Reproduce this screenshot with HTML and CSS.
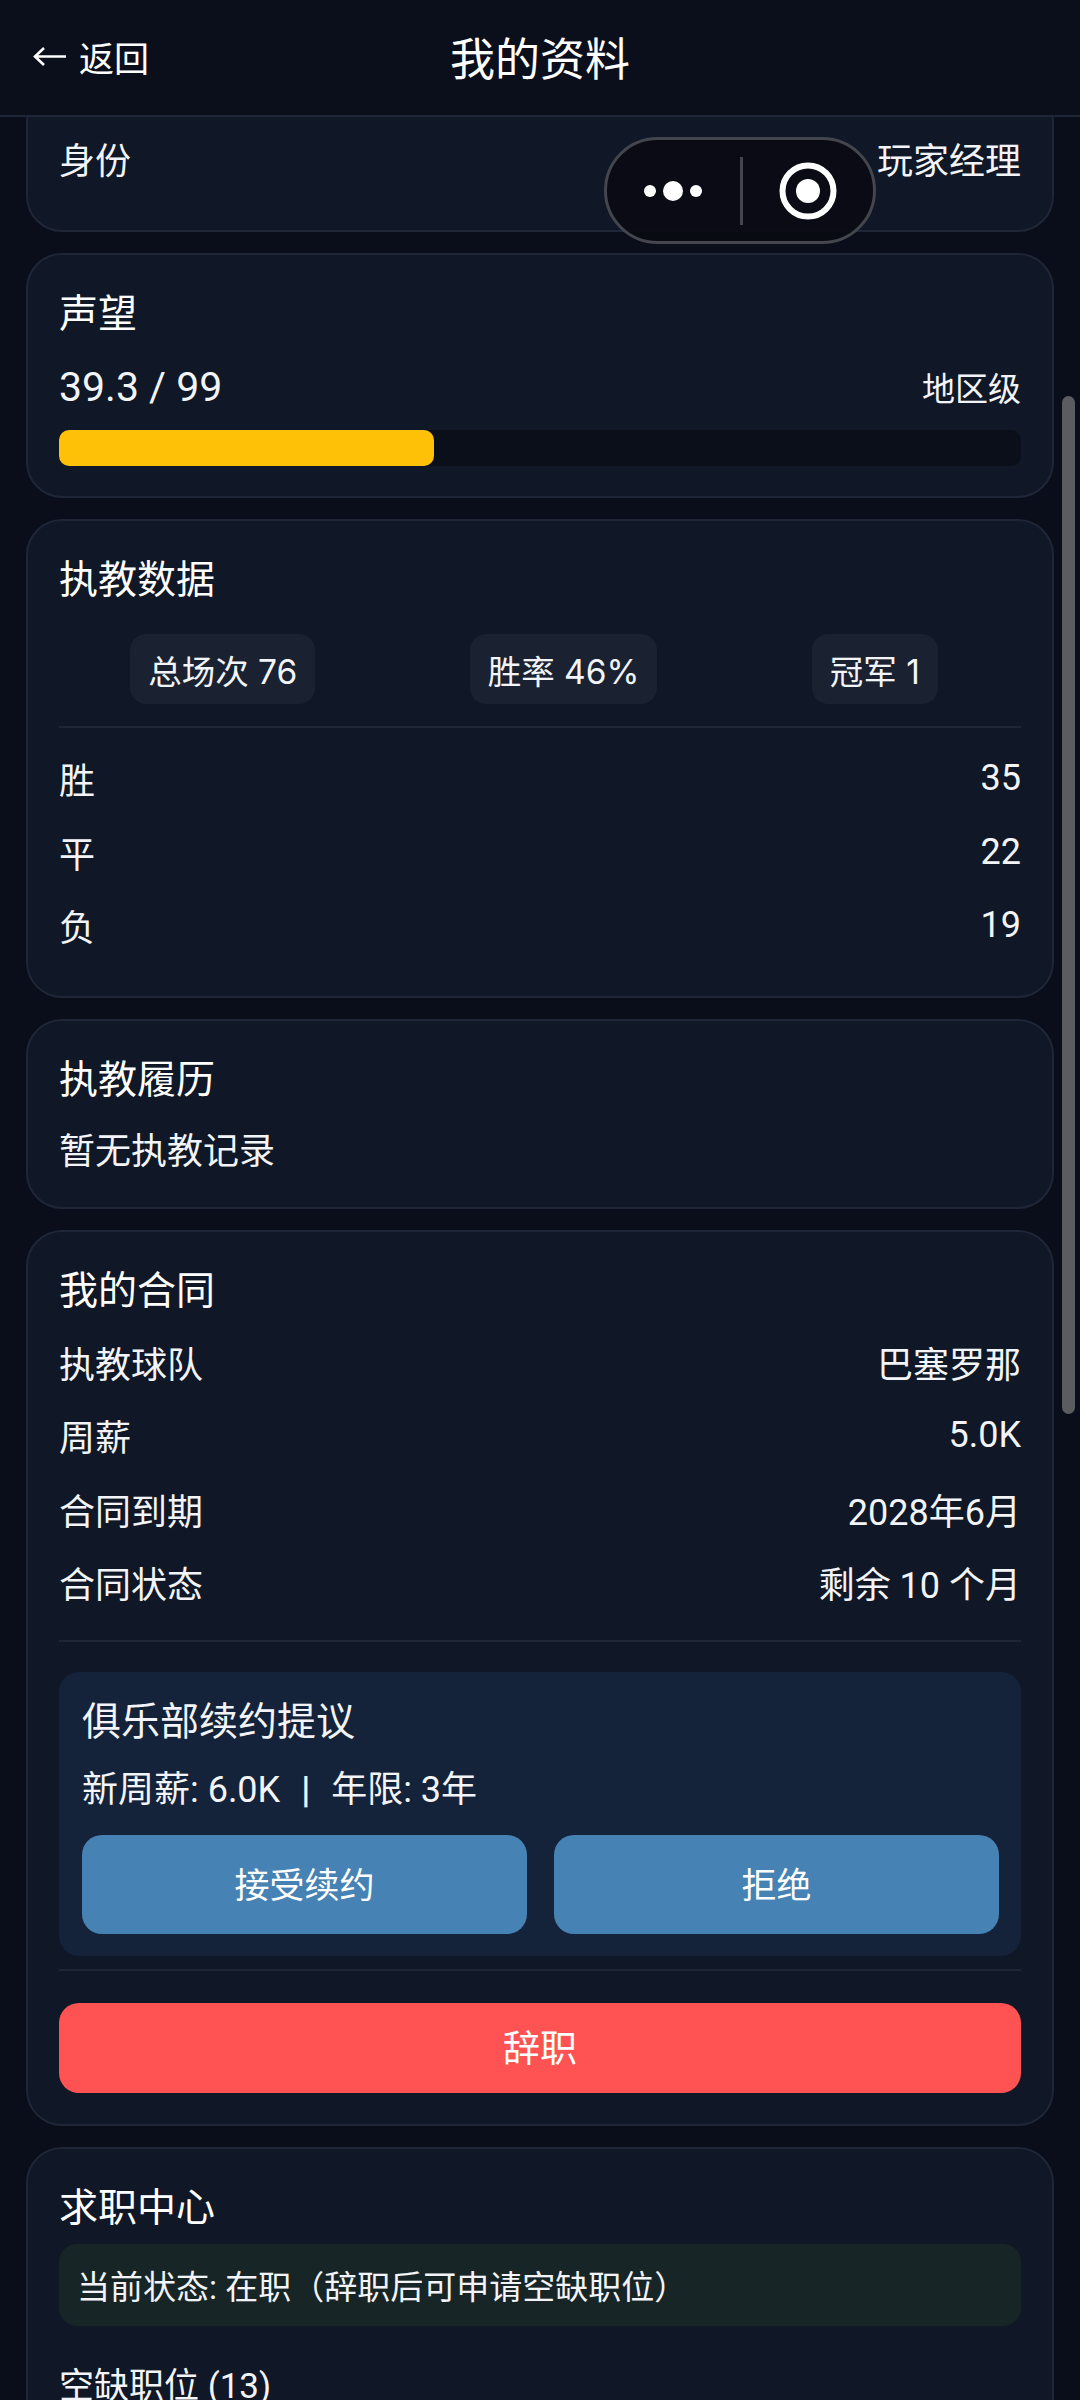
FILE: index.html
```html
<!DOCTYPE html>
<html lang="zh-CN">
<head>
  <meta charset="UTF-8" />
  <meta name="viewport" content="width=device-width, initial-scale=1.0" />
  <title>我的资料</title>
  <link rel="stylesheet" href="styles.css">
</head>
<body>
  <div class="app">
    <header class="topbar">
      <span class="back">
        <svg class="back-arrow" width="34" height="20" viewBox="0 0 34 20">
          <path d="M33 10H3M11 1.5L2 10l9 8.5" fill="none" stroke="#fff" stroke-width="2.6"/>
        </svg>
        返回
      </span>
      <h1>我的资料</h1>
    </header>

    <main class="scroller">
      <div class="list">
        <section class="card card-identity">
          <div class="row"><span>身份</span><span>玩家经理</span></div>
        </section>

        <section class="card card-rep">
          <h2>声望</h2>
          <div class="meta"><span class="rep-value">39.3 / 99</span><span class="rep-level">地区级</span></div>
          <div class="bar"><div class="bar-fill" style="width: 39%"></div></div>
        </section>

        <section class="card">
          <h2>执教数据</h2>
          <div class="pills">
            <span class="pill">总场次 76</span>
            <span class="pill">胜率 46%</span>
            <span class="pill">冠军 1</span>
          </div>
          <hr class="line line-stats">
          <div class="row"><span>胜</span><span>35</span></div>
          <div class="row"><span>平</span><span>22</span></div>
          <div class="row"><span>负</span><span>19</span></div>
        </section>

        <section class="card card-history">
          <h2>执教履历</h2>
          <p class="empty">暂无执教记录</p>
        </section>

        <section class="card">
          <h2>我的合同</h2>
          <div class="row row-first"><span>执教球队</span><span>巴塞罗那</span></div>
          <div class="row"><span>周薪</span><span>5.0K</span></div>
          <div class="row"><span>合同到期</span><span>2028年6月</span></div>
          <div class="row"><span>合同状态</span><span>剩余 10 个月</span></div>
          <hr class="line line-contract">
          <div class="offer">
            <h3>俱乐部续约提议</h3>
            <p>新周薪: 6.0K <b class="offer-sep">|</b> 年限: 3年</p>
            <div class="offer-actions">
              <button class="btn">接受续约</button>
              <button class="btn">拒绝</button>
            </div>
          </div>
          <hr class="line line-offer">
          <button class="btn-danger">辞职</button>
        </section>

        <section class="card">
          <h2>求职中心</h2>
          <div class="status">当前状态: 在职（辞职后可申请空缺职位）</div>
          <h3 class="vacancy">空缺职位 (13)</h3>
        </section>
      </div>
    </main>

    <div class="scrollbar"></div>

    <div class="capsule">
      <svg class="capsule-icon" width="60" height="24" viewBox="0 0 60 24">
        <circle cx="7" cy="12" r="6" fill="#fff"/>
        <circle cx="30" cy="12" r="10" fill="#fff"/>
        <circle cx="53" cy="12" r="6" fill="#fff"/>
      </svg>
      <span class="capsule-sep"></span>
      <svg class="capsule-icon" width="58" height="58" viewBox="0 0 58 58">
        <circle cx="29" cy="29" r="25.5" fill="none" stroke="#fff" stroke-width="6"/>
        <circle cx="29" cy="29" r="12" fill="#fff"/>
      </svg>
    </div>
  </div>
</body>
</html>
```

FILE: styles.css
```css
* {
  box-sizing: border-box;
}
html, body {
  margin: 0;
  height: 100%;
}
body {
  font-family: Roboto, "Noto Sans CJK SC", sans-serif;
  background-color: #0a0e1a;
  color: #f2f4f7;
}
.app {
  position: relative;
  height: 2400px;
  overflow: hidden;
  display: flex;
  flex-direction: column;
}
.topbar {
  flex: none;
  height: 117px;
  padding-bottom: 3px;
  display: flex;
  align-items: center;
  justify-content: center;
  position: relative;
  background-color: #0b0f1c;
  border-bottom: 2px solid #1e2638;
}
.topbar h1 {
  margin: 0;
  font-size: 45px;
  font-weight: 400;
  color: #fff;
}
.back {
  position: absolute;
  left: 33px;
  top: 50%;
  transform: translateY(-52%);
  display: flex;
  align-items: center;
  gap: 12px;
  font-size: 35px;
  color: #fff;
}
.back-arrow {
  flex: none;
  display: block;
}
.scroller {
  flex: 1;
  overflow: hidden;
  padding: 0 26px;
}
.list {
  margin-top: -30px;
  display: flex;
  flex-direction: column;
  gap: 21px;
}
.card {
  background-color: #101726;
  border: 2px solid #1e2638;
  border-radius: 36px;
  padding: 31px;
}
.card-identity {
  padding-top: 35px;
  padding-bottom: 0;
  height: 145px;
}
.card-rep {
  padding-bottom: 30px;
}
.card-history {
  padding-bottom: 30px;
}
h2 {
  margin: 0;
  font-size: 39px;
  font-weight: 400;
  line-height: 56px;
  color: #fff;
}
.row {
  height: 73.5px;
  padding-bottom: 5px;
  display: flex;
  align-items: center;
  justify-content: space-between;
  font-size: 36px;
}
.row-first {
  margin-top: 9px;
}
.meta {
  margin-top: 20px;
  height: 50px;
  display: flex;
  align-items: center;
  justify-content: space-between;
}
.rep-value {
  font-size: 41px;
}
.rep-level {
  font-size: 33px;
}
.bar {
  margin-top: 18px;
  height: 36px;
  border-radius: 10px;
  background-color: #0b0f1a;
}
.bar-fill {
  height: 100%;
  border-radius: 10px;
  background-color: #ffc107;
}
.pills {
  margin-top: 26px;
  display: flex;
  justify-content: space-around;
}
.pill {
  height: 70px;
  margin-right: 12px;
  padding: 0 18px;
  display: flex;
  align-items: center;
  font-family: Inter, "Noto Sans CJK SC", sans-serif;
  font-size: 33.5px;
  border-radius: 16px;
  background-color: #1a2232;
}
.line {
  margin: 0;
  border: none;
  height: 2px;
  background-color: #1e2638;
}
.line-stats {
  margin-top: 22px;
  margin-bottom: 16px;
}
.line-contract {
  margin-top: 18px;
  margin-bottom: 30px;
}
.line-offer {
  margin-top: 13px;
  margin-bottom: 32px;
}
.empty {
  margin: 19px 0 0;
  font-size: 36px;
  line-height: 50px;
}
.offer {
  padding: 22px 22px 22px 23px;
  border-radius: 20px;
  background-color: #15233a;
}
.offer h3 {
  margin: 0;
  font-size: 39px;
  font-weight: 400;
  line-height: 56px;
}
.offer p {
  margin: 15px 0 0;
  font-size: 36px;
  line-height: 50px;
}
.offer-sep {
  margin: 0 12px;
  font-weight: 700;
}
.offer-actions {
  margin-top: 20px;
  display: grid;
  grid-template-columns: 1fr 1fr;
  gap: 27px;
}
.btn {
  height: 99px;
  padding: 0 0 4px;
  border: none;
  border-radius: 20px;
  background-color: #4682b4;
  color: #fff;
  font-family: inherit;
  font-size: 35px;
}
.btn-danger {
  display: block;
  width: 100%;
  height: 90px;
  padding: 0 0 4px;
  border: none;
  border-radius: 20px;
  background-color: #ff5252;
  color: #fff;
  font-family: inherit;
  font-size: 37px;
}
.status {
  margin-top: 8px;
  height: 82px;
  padding: 0 18px;
  display: flex;
  align-items: center;
  font-size: 33px;
  border-radius: 18px;
  background-color: #182526;
}
.vacancy {
  margin: 31px 0 0;
  font-size: 35px;
  font-weight: 400;
}
.scrollbar {
  position: absolute;
  left: 1062px;
  top: 396px;
  width: 13px;
  height: 1018px;
  border-radius: 7px;
  background-color: #5a5c60;
}
.capsule {
  position: absolute;
  left: 604px;
  top: 137px;
  width: 272px;
  height: 107px;
  display: flex;
  align-items: center;
  justify-content: space-between;
  padding: 0 36px;
  border: 3px solid #44464d;
  border-radius: 54px;
  background-color: rgba(10, 11, 18, 0.92);
}
.capsule-sep {
  width: 3px;
  height: 68px;
  background-color: #44464d;
}
.capsule-icon {
  flex: none;
  display: block;
}
```
